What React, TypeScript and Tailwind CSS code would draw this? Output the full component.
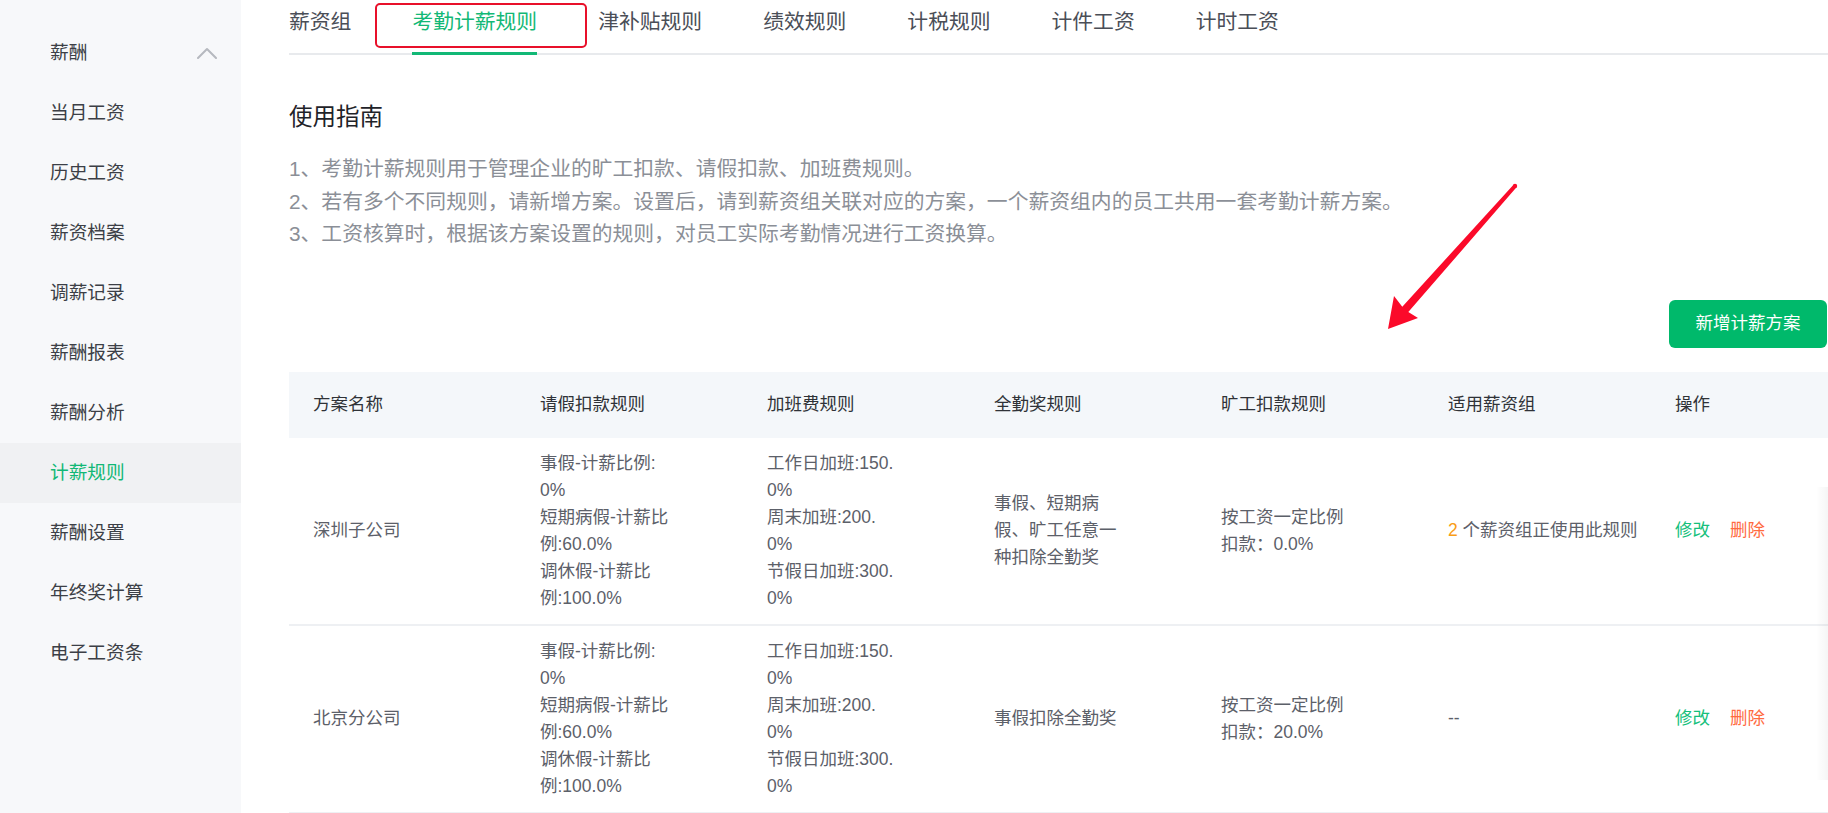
import React from "react";

const font = "font-['Liberation_Sans','Noto_Sans_CJK_SC',sans-serif]";

const menu = [
  "当月工资",
  "历史工资",
  "薪资档案",
  "调薪记录",
  "薪酬报表",
  "薪酬分析",
  "计薪规则",
  "薪酬设置",
  "年终奖计算",
  "电子工资条",
];

const tabs = ["薪资组", "考勤计薪规则", "津补贴规则", "绩效规则", "计税规则", "计件工资", "计时工资"];

const columns = ["方案名称", "请假扣款规则", "加班费规则", "全勤奖规则", "旷工扣款规则", "适用薪资组", "操作"];

const leaveRule = ["事假-计薪比例:", "0%", "短期病假-计薪比", "例:60.0%", "调休假-计薪比", "例:100.0%"];
const overtimeRule = ["工作日加班:150.", "0%", "周末加班:200.", "0%", "节假日加班:300.", "0%"];

const rows = [
  {
    name: "深圳子公司",
    attend: ["事假、短期病", "假、旷工任意一", "种扣除全勤奖"],
    absent: ["按工资一定比例", "扣款：0.0%"],
    groups: 2,
  },
  {
    name: "北京分公司",
    attend: ["事假扣除全勤奖"],
    absent: ["按工资一定比例", "扣款：20.0%"],
    groups: 0,
  },
];

function Lines({ lines }: { lines: string[] }) {
  return (
    <div>
      {lines.map((l, i) => (
        <div key={i} className="leading-[27px] whitespace-nowrap">
          {l}
        </div>
      ))}
    </div>
  );
}

function Cell({ children }: { children: React.ReactNode }) {
  return <div className="flex w-[227px] shrink-0 items-center pl-[24px]">{children}</div>;
}

function Sidebar() {
  return (
    <aside className="w-[241px] shrink-0 bg-[#f7f8fa] pt-[23px]">
      <div className="flex h-[60px] items-center justify-between pl-[50px] pr-[24px] text-[18.7px] text-[#3c3f46]">
        <span>薪酬</span>
        <svg width="20" height="12" viewBox="0 0 20 12" fill="none">
          <polyline points="1,11 10,2 19,11" stroke="#b6b9bf" strokeWidth="2" strokeLinecap="round" strokeLinejoin="round" />
        </svg>
      </div>
      {menu.map((m) => {
        const active = m === "计薪规则";
        return (
          <div
            key={m}
            className={`flex h-[60px] items-center pl-[50px] text-[18.7px] ${
              active ? "bg-[#f0f1f3] text-[#12b876]" : "text-[#3c3f46]"
            }`}
          >
            {m}
          </div>
        );
      })}
    </aside>
  );
}

function Tabs() {
  return (
    <div className="flex h-[55px] gap-[61px] border-b-2 border-[#e8eaed]">
      {tabs.map((t) => {
        const active = t === "考勤计薪规则";
        return (
          <div key={t} className="relative h-[53px]">
            <div className={`text-[20.8px] leading-[44px] ${active ? "text-[#12b876]" : "text-[#4a4e57]"}`}>{t}</div>
            {active && <div className="absolute bottom-[-2px] left-0 right-0 h-[3px] bg-[#12b876]" />}
          </div>
        );
      })}
    </div>
  );
}

function Guide() {
  return (
    <div>
      <h2 className="mt-[46px] text-[23.5px] leading-[32px] text-[#1f2329]">使用指南</h2>
      <div className="mt-[20px] text-[20.8px] leading-[32.5px] text-[#8b8f97]">
        <p>1、考勤计薪规则用于管理企业的旷工扣款、请假扣款、加班费规则。</p>
        <p>2、若有多个不同规则，请新增方案。设置后，请到薪资组关联对应的方案，一个薪资组内的员工共用一套考勤计薪方案。</p>
        <p>3、工资核算时，根据该方案设置的规则，对员工实际考勤情况进行工资换算。</p>
      </div>
    </div>
  );
}

function Table() {
  return (
    <div className="mt-[24px] w-[1589px] text-[17.5px]">
      <div className="flex h-[66px] bg-[#f4f7fa] text-[#2f3237]">
        {columns.map((c) => (
          <Cell key={c}>{c}</Cell>
        ))}
      </div>
      {rows.map((r) => (
        <div key={r.name} className="flex h-[188px] border-b-2 border-[#eef0f3] text-[#5c6069]">
          <Cell>{r.name}</Cell>
          <Cell>
            <Lines lines={leaveRule} />
          </Cell>
          <Cell>
            <Lines lines={overtimeRule} />
          </Cell>
          <Cell>
            <Lines lines={r.attend} />
          </Cell>
          <Cell>
            <Lines lines={r.absent} />
          </Cell>
          <Cell>
            {r.groups > 0 ? (
              <span className="whitespace-nowrap">
                <span className="text-[#f99d16]">{r.groups}</span> 个薪资组正使用此规则
              </span>
            ) : (
              <span>--</span>
            )}
          </Cell>
          <Cell>
            <span className="text-[#15bf7b]">修改</span>
            <span className="ml-[20px] text-[#ff6b3f]">删除</span>
          </Cell>
        </div>
      ))}
    </div>
  );
}

export default function App() {
  return (
    <div className={`relative flex h-[813px] w-[1828px] overflow-hidden bg-white ${font}`}>
      <Sidebar />
      <main className="min-w-0 flex-1 overflow-hidden pl-[48px]">
        <Tabs />
        <Guide />
        <div className="mt-[49px] flex justify-end pr-[1px]">
          <button className="h-[48px] w-[158px] rounded-[6px] bg-[#00b96b] text-[17.5px] text-white">新增计薪方案</button>
        </div>
        <Table />
      </main>

      {/* annotation: red box around the active tab */}
      <div className="pointer-events-none absolute left-[375px] top-[3px] h-[45px] w-[212px] rounded-[5px] border-[2.5px] border-[#e8102a]" />

      {/* faint shadow at the right edge */}
      <div className="pointer-events-none absolute left-[1816px] top-[487px] h-[293px] w-[12px] bg-gradient-to-r from-transparent to-black/[0.04]" />

      {/* annotation: red arrow */}
      <svg className="pointer-events-none absolute left-0 top-0" width="1828" height="813" viewBox="0 0 1828 813">
        <polygon
          points="1513.5,184.7 1402.3,306.7 1394,296 1388,329 1418,318 1408.3,312.1 1516.5,187.3"
          fill="#fb0a2a"
        />
        <circle cx="1515" cy="186" r="2.2" fill="#fb0a2a" />
      </svg>
    </div>
  );
}
